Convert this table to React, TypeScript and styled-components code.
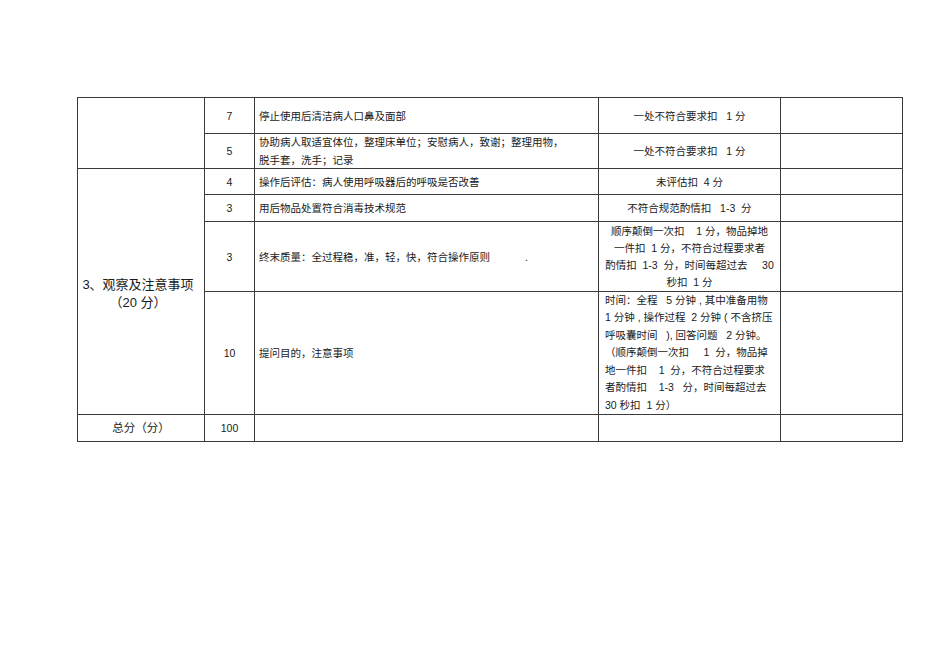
import React from "react";
import styled, { createGlobalStyle } from "styled-components";

const Global = createGlobalStyle`
  html, body { margin: 0; padding: 0; background: #ffffff; }
  body { font-family: "Liberation Sans", "Noto Sans CJK SC", sans-serif; color: #1a1a1a; }
`;

const Page = styled.div`
  width: 950px;
  height: 672px;
  padding: 97px 0 0 77px;
  box-sizing: border-box;
`;

const Grid = styled.div`
  display: grid;
  grid-template-columns: 127px 50px 344px 182px 122px;
  grid-template-rows: 36px 35px 26px 27px 70px 123px 27px;
  width: max-content;
  border-left: 1px solid #3a3a3a;
  border-top: 1px solid #3a3a3a;
`;

type CellProps = {
  $align?: "left" | "center";
  $size?: number;
  $pad?: number;
  $rows?: string;
  $lh?: number;
};

const Cell = styled.div<CellProps>`
  box-sizing: border-box;
  border-right: 1px solid #3a3a3a;
  border-bottom: 1px solid #3a3a3a;
  display: flex;
  flex-direction: column;
  justify-content: center;
  align-items: ${(p) => (p.$align === "left" ? "flex-start" : "center")};
  text-align: ${(p) => (p.$align === "left" ? "left" : "center")};
  padding: 0 ${(p) => p.$pad ?? 4}px;
  font-size: ${(p) => p.$size ?? 10.5}px;
  line-height: ${(p) => p.$lh ?? 18}px;
  white-space: pre;
  grid-row: ${(p) => p.$rows ?? "auto"};
`;

const SectionCell = styled(Cell)`
  padding: 4px 6px 0 0;
`;

const Line = styled.div`
  white-space: pre;
`;

const rows5 = [
  "顺序颠倒一次扣    1 分，物品掉地",
  "一件扣  1 分，不符合过程要求者",
  "酌情扣  1-3  分，时间每超过去     30",
  "秒扣  1 分",
];

const rows6 = [
  "时间：全程   5 分钟 , 其中准备用物",
  "1 分钟 , 操作过程  2 分钟 ( 不含挤压",
  "呼吸囊时间   ), 回答问题   2 分钟。",
  "（顺序颠倒一次扣     1  分，物品掉",
  "地一件扣    1  分，不符合过程要求",
  "者酌情扣    1-3   分，时间每超过去",
  "30 秒扣  1 分）",
];

export default function App() {
  return (
    <Page>
      <Global />
      <Grid>
        <Cell $rows="1 / span 2" />
        <Cell>7</Cell>
        <Cell $align="left">停止使用后清洁病人口鼻及面部</Cell>
        <Cell>一处不符合要求扣   1 分</Cell>
        <Cell />

        <Cell>5</Cell>
        <Cell $align="left">
          <Line>协助病人取适宜体位，整理床单位；安慰病人，致谢；整理用物，</Line>
          <Line>脱手套，洗手；记录</Line>
        </Cell>
        <Cell>一处不符合要求扣   1 分</Cell>
        <Cell />

        <SectionCell $rows="3 / span 4" $size={13}>
          <Line>3、观察及注意事项</Line>
          <Line>（20 分）</Line>
        </SectionCell>
        <Cell>4</Cell>
        <Cell $align="left">操作后评估：病人使用呼吸器后的呼吸是否改善</Cell>
        <Cell>未评估扣  4 分</Cell>
        <Cell />

        <Cell>3</Cell>
        <Cell $align="left">用后物品处置符合消毒技术规范</Cell>
        <Cell>不符合规范酌情扣   1-3  分</Cell>
        <Cell />

        <Cell>3</Cell>
        <Cell $align="left">终末质量：全过程稳，准，轻，快，符合操作原则            .</Cell>
        <Cell $lh={17}>
          {rows5.map((t, i) => (
            <Line key={i}>{t}</Line>
          ))}
        </Cell>
        <Cell />

        <Cell>10</Cell>
        <Cell $align="left">提问目的，注意事项</Cell>
        <Cell $align="left" $pad={6} $lh={17.5}>
          {rows6.map((t, i) => (
            <Line key={i}>{t}</Line>
          ))}
        </Cell>
        <Cell />

        <Cell $size={11.5}>总分（分）</Cell>
        <Cell>100</Cell>
        <Cell />
        <Cell />
        <Cell />
      </Grid>
    </Page>
  );
}
